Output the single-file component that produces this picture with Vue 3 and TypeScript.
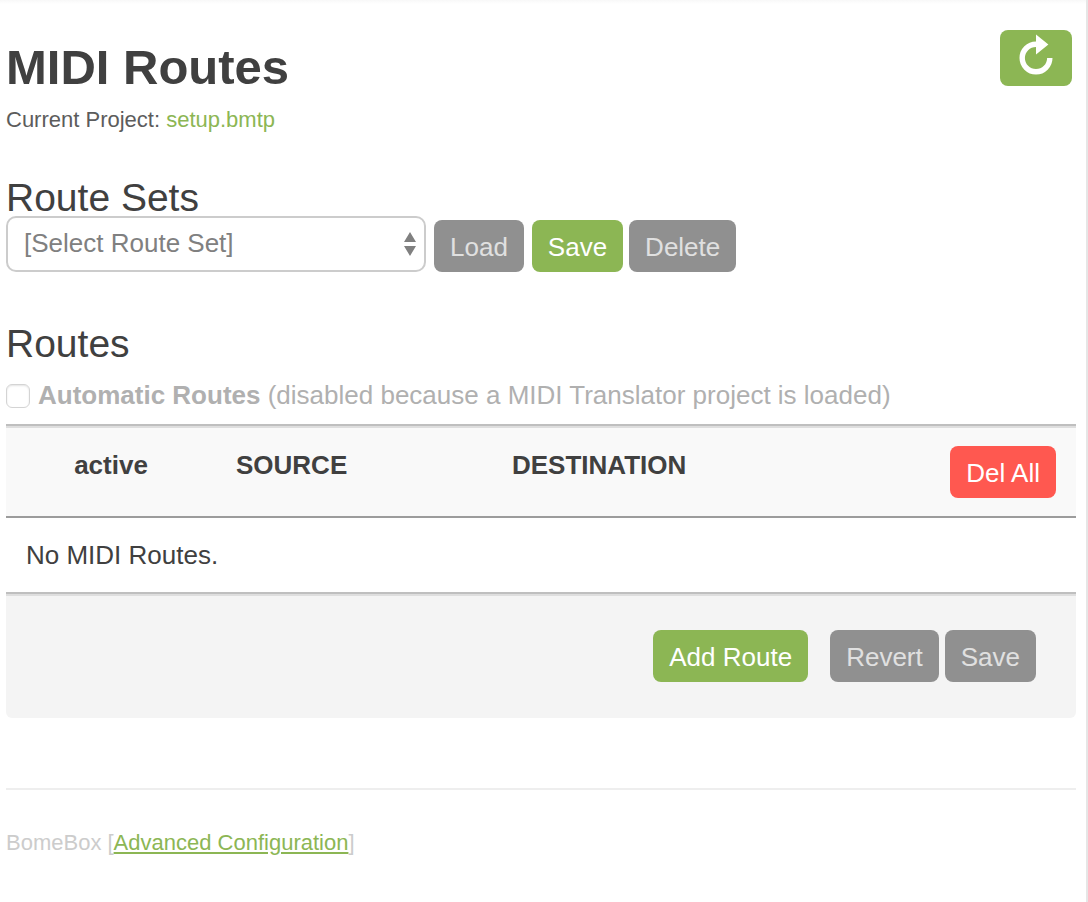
<script setup lang="ts">
import { ref } from 'vue'

interface Route {
  source: string
  destination: string
  active: boolean
}

const project = ref('setup.bmtp')
const routeSets = ref<string[]>([])
const selectedSet = ref('')
const automatic = ref(false)
const routes = ref<Route[]>([])
</script>

<template>
  <main class="page">
    <header class="top">
      <div>
        <h1>MIDI Routes</h1>
        <p class="project">Current Project: <a href="#project">{{ project }}</a></p>
      </div>
      <button type="button" class="btn green refresh" aria-label="Refresh">
        <svg viewBox="0 0 40 44" width="40" height="44" aria-hidden="true">
          <path d="M33.8 23A13.8 13.8 0 1 1 20 9.2" fill="none" stroke="#fff" stroke-width="5.4" />
          <path d="M20 -0.4L32.4 9.5L20 19.4Z" fill="#fff" />
        </svg>
      </button>
    </header>

    <section class="sets">
      <h2 id="sets-title">Route Sets</h2>
      <div class="set-row">
        <div class="select-wrap">
          <select v-model="selectedSet" aria-labelledby="sets-title">
            <option value="">[Select Route Set]</option>
            <option v-for="s in routeSets" :key="s" :value="s">{{ s }}</option>
          </select>
          <svg class="arrows" viewBox="0 0 12 24" width="12" height="24" aria-hidden="true">
            <path d="M6 0L12 10H0ZM0 14H12L6 24Z" fill="#808080" />
          </svg>
        </div>
        <div class="set-buttons">
          <button type="button" class="btn" disabled>Load</button>
          <button type="button" class="btn green">Save</button>
        </div>
        <button type="button" class="btn" disabled>Delete</button>
      </div>
    </section>

    <section>
      <h2>Routes</h2>
      <label class="auto">
        <input v-model="automatic" type="checkbox" disabled />
        <span><strong>Automatic Routes</strong> (disabled because a MIDI Translator project is loaded)</span>
      </label>

      <table>
        <colgroup>
          <col class="c-active" />
          <col class="c-source" />
          <col />
          <col class="c-action" />
        </colgroup>
        <thead>
          <tr>
            <th class="center">active</th>
            <th>SOURCE</th>
            <th>DESTINATION</th>
            <td class="action"><button type="button" class="btn red">Del All</button></td>
          </tr>
        </thead>
        <tbody>
          <tr v-if="routes.length === 0">
            <td colspan="4">No MIDI Routes.</td>
          </tr>
          <tr v-for="(r, i) in routes" :key="i">
            <td class="center"><input v-model="r.active" type="checkbox" aria-label="active" /></td>
            <td>{{ r.source }}</td>
            <td colspan="2">{{ r.destination }}</td>
          </tr>
        </tbody>
        <tfoot>
          <tr>
            <td colspan="4">
              <div class="foot-buttons">
                <button type="button" class="btn green add">Add Route</button>
                <button type="button" class="btn" disabled>Revert</button>
                <button type="button" class="btn" disabled>Save</button>
              </div>
            </td>
          </tr>
        </tfoot>
      </table>
    </section>

    <footer>BomeBox [<a href="#advanced">Advanced Configuration</a>]</footer>
  </main>
</template>

<style>
body {
  margin: 0;
  background: #fff;
}
</style>

<style scoped>
.page {
  box-sizing: border-box;
  min-height: 100vh;
  padding: 30px 10px 0 6px;
  border-right: 2px solid #e6e6e6;
  background: linear-gradient(#f8f8f8, #fff 4px);
  color: #404040;
  font-family: "Helvetica Neue", "Liberation Sans", Arial, sans-serif;
  font-size: 26px;
  line-height: 38px;
}

.top {
  display: flex;
  justify-content: space-between;
  align-items: flex-start;
  padding-right: 4px;
}

h1 {
  margin: 7px 0 0;
  font-size: 49px;
  line-height: 60px;
}

h2 {
  margin: 0;
  font-size: 39px;
  font-weight: 400;
  line-height: 40px;
}

.project {
  margin: 7px 0 0;
  color: #5c5c5c;
  font-size: 22px;
  line-height: 32px;
}

a {
  color: #8cb654;
  text-decoration: none;
}

.btn {
  height: 52px;
  padding: 2px 16px 0;
  border: 0;
  border-radius: 8px;
  background: #909090;
  color: #fff;
  font-family: inherit;
  font-size: 26px;
  line-height: 50px;
  white-space: nowrap;
}

.btn:disabled {
  color: #e0e0e0;
}

.btn.green {
  background: #8cb654;
}

.btn.red {
  background: #ff5850;
}

.btn.refresh {
  height: 56px;
  padding: 0 16px 2px;
  line-height: 0;
}

.refresh svg {
  display: block;
  overflow: visible;
}

.sets {
  margin: 42px 0 52px;
}

.set-row {
  display: flex;
  align-items: flex-end;
  gap: 6px;
  margin-top: -2px;
}

.set-buttons {
  display: flex;
  gap: 8px;
  margin-left: 2px;
}

.select-wrap {
  position: relative;
  width: 420px;
}

select {
  display: block;
  box-sizing: border-box;
  width: 100%;
  height: 56px;
  padding: 0 40px 2px 16px;
  border: 2px solid #ccc;
  border-radius: 10px;
  appearance: none;
  background: #fff;
  color: #808080;
  font-family: inherit;
  font-size: 26px;
}

.arrows {
  position: absolute;
  top: 16px;
  right: 10px;
  pointer-events: none;
}

.auto {
  display: flex;
  align-items: center;
  gap: 8px;
  margin: 12px 0 10px;
  color: #b0b0b0;
}

.auto input {
  flex: none;
  box-sizing: border-box;
  width: 24px;
  height: 24px;
  margin: 2px 0 0;
  border: 1px solid #d4d4d4;
  border-radius: 6px;
  appearance: none;
  background: #fff;
  box-shadow: inset 0 1px 2px #e4e4e4;
}

table {
  width: 100%;
  border-spacing: 0;
  table-layout: fixed;
}

.c-active {
  width: 210px;
}

.c-source {
  width: 276px;
}

.c-action {
  width: 160px;
}

th,
td {
  padding: 18px 20px;
  text-align: left;
  vertical-align: top;
}

thead th,
thead td {
  border-top: 2px solid #bfbfbf;
  border-bottom: 2px solid #9c9c9c;
  background: #f9f9f9;
  box-shadow: inset 0 2px #dedede;
  padding-top: 20px;
}

.center {
  text-align: center;
}

.action {
  text-align: right;
}

.action .btn {
  display: block;
  margin-left: auto;
}

tfoot td {
  padding: 36px 40px;
  border-top: 2px solid #bfbfbf;
  border-radius: 0 0 6px 6px;
  background: #f4f4f4;
  box-shadow: inset 0 2px #dedede;
}

.foot-buttons {
  display: flex;
  justify-content: flex-end;
  gap: 6px;
}

.add {
  margin-right: 16px;
}

footer {
  margin-top: 70px;
  padding-top: 34px;
  border-top: 2px solid #eee;
  color: #ccc;
  font-size: 22px;
}

footer a {
  text-decoration: underline;
}
</style>
